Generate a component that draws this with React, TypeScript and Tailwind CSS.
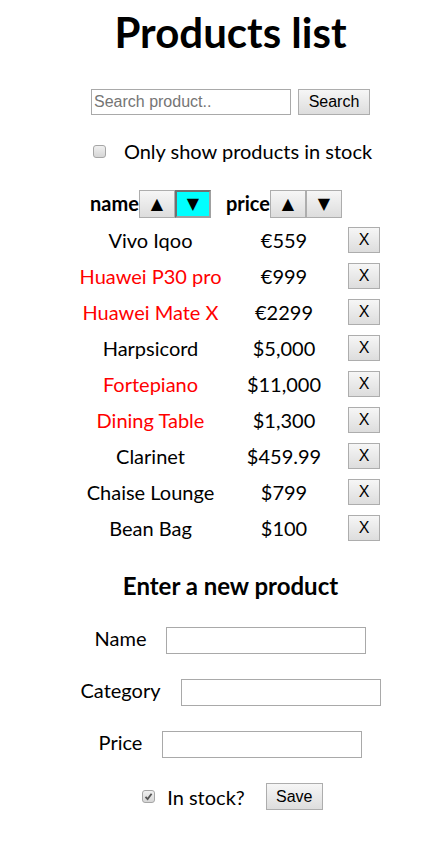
import React from "react";

const products = [
  { name: "Vivo Iqoo", price: "€559", stocked: true },
  { name: "Huawei P30 pro", price: "€999", stocked: false },
  { name: "Huawei Mate X", price: "€2299", stocked: false },
  { name: "Harpsicord", price: "$5,000", stocked: true },
  { name: "Fortepiano", price: "$11,000", stocked: false },
  { name: "Dining Table", price: "$1,300", stocked: false },
  { name: "Clarinet", price: "$459.99", stocked: true },
  { name: "Chaise Lounge", price: "$799", stocked: true },
  { name: "Bean Bag", price: "$100", stocked: true },
];

const btn =
  "flex items-center justify-center border border-[#adadad] bg-gradient-to-b from-[#f6f6f6] to-[#dddddd] text-black";

function Check({ checked }: { checked?: boolean }) {
  return (
    <span className="inline-flex h-[13px] w-[13px] items-center justify-center rounded-[3px] border border-[#a6a6a6] bg-gradient-to-b from-[#f0f0f0] to-[#d6d6d6]">
      {checked && (
        <svg width="9" height="9" viewBox="0 0 9 9">
          <path d="M1.5 4.8 L3.6 7 L7.6 1.8" stroke="#555" strokeWidth="1.8" fill="none" />
        </svg>
      )}
    </span>
  );
}

function SortBtn({ children, active }: { children: React.ReactNode; active?: boolean }) {
  return (
    <div
      className={
        active
          ? "flex h-[28px] w-[36px] items-center justify-center border-2 border-t-[#707070] border-l-[#707070] border-r-[#a0a0a0] border-b-[#a0a0a0] bg-[#00ffff] text-[16px] text-black"
          : "flex h-[28px] w-[36px] items-center justify-center border border-[#adadad] bg-gradient-to-b from-[#f6f6f6] to-[#dddddd] text-[16px] text-black"
      }
      style={{ fontFamily: '"DejaVu Sans", sans-serif' }}
    >
      {children}
    </div>
  );
}

export default function App() {
  const sans = { fontFamily: 'Lato, "Open Sans", sans-serif' };
  const arial = { fontFamily: '"Liberation Sans", Arial, sans-serif' };
  return (
    <div className="min-h-[845px] bg-white pl-[14px] text-black" style={sans}>
      <div className="flex flex-col items-center">
        <h1 className="mt-[8px] h-[48px] text-[42px] font-bold leading-[48px]">Products list</h1>

        <div className="mt-[33px] flex h-[26px] items-center gap-[7px]" style={arial}>
          <div className="flex h-[26px] w-[200px] items-center border border-[#a9a9a9] px-[2px] text-[16px] text-[#757575]">
            Search product..
          </div>
          <div className={btn + " h-[26px] w-[72px] text-[16px]"}>Search</div>
        </div>

        <div className="mt-[23px] flex h-[26px] items-center text-[20px]">
          <span className="ml-[4px] flex items-center">
            <Check />
          </span>
          <span className="ml-[18px]">Only show products in stock</span>
        </div>

        <div className="mt-[22px] grid grid-cols-[139px_128px_32px] text-[20px]">
          <div className="flex h-[36px] items-center justify-center">
            <span className="mb-[3px] font-bold">name</span>
            <SortBtn>▲</SortBtn>
            <SortBtn active>▼</SortBtn>
          </div>
          <div className="flex h-[36px] items-center justify-center">
            <span className="mb-[3px] font-bold">price</span>
            <SortBtn>▲</SortBtn>
            <SortBtn>▼</SortBtn>
          </div>
          <div className="h-[36px]" />
          {products.map((p) => (
            <React.Fragment key={p.name}>
              <div
                className={
                  "flex h-[36px] items-center justify-center whitespace-nowrap " +
                  (p.stocked ? "text-black" : "text-[#ff0000]")
                }
              >
                {p.name}
              </div>
              <div className="flex h-[36px] items-center justify-center">{p.price}</div>
              <div className="flex h-[36px] items-center justify-center">
                <div className={btn + " h-[26px] w-[32px] text-[16px]"} style={arial}>
                  X
                </div>
              </div>
            </React.Fragment>
          ))}
        </div>

        <h2 className="mt-[24px] h-[32px] text-[24px] font-bold leading-[32px]">Enter a new product</h2>

        <div className="mt-[25px] flex flex-col items-center gap-[25px] text-[20px]">
          {["Name", "Category", "Price"].map((l) => (
            <div key={l} className="flex h-[27px] items-center">
              <span className="mb-[5px]">{l}</span>
              <div className="ml-[20px] h-[27px] w-[200px] border border-[#a9a9a9]" />
            </div>
          ))}
          <div className="flex h-[27px] items-center">
            <span className="ml-[4px] flex items-center">
              <Check checked />
            </span>
            <span className="ml-[12px]">In stock?</span>
            <div className={btn + " ml-[21px] h-[27px] w-[57px] text-[16px]"} style={arial}>
              Save
            </div>
          </div>
        </div>
      </div>
    </div>
  );
}
